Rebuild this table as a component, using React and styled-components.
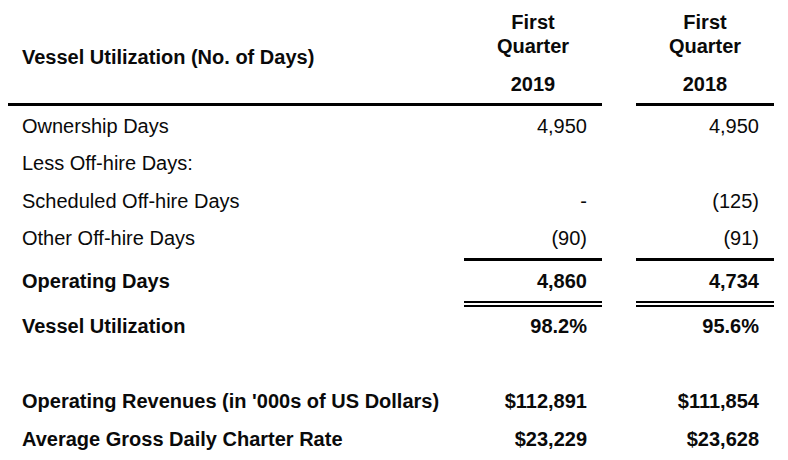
import React from "react";
import styled, { createGlobalStyle } from "styled-components";

const Global = createGlobalStyle`
  html, body { margin: 0; padding: 0; background: #fff; }
`;

const Table = styled.div`
  padding: 10px 0 0 8px;
  font-family: "Liberation Sans", Arial, sans-serif;
  font-size: 20px;
  color: #0a0a0a;
`;

const HeadRow = styled.div`
  display: flex;
  align-items: stretch;
  font-weight: 700;
  line-height: 24px;
`;

const HeadLabel = styled.div`
  width: 456px;
  box-sizing: border-box;
  padding-left: 14px;
  display: flex;
  align-items: center;
  border-bottom: 3px solid #000;
`;

const HeadCell = styled.div`
  width: 138px;
  box-sizing: border-box;
  text-align: center;
  padding-bottom: 7px;
  border-bottom: 3px solid #000;
  & + & { margin-left: 34px; }
`;

const Year = styled.div`
  margin-top: 14px;
`;

const Body = styled.div`
  padding-top: 1.5px;
`;

const Row = styled.div`
  display: flex;
  align-items: flex-start;
  line-height: ${(p) => p.$h || 37.5}px;
  font-weight: ${(p) => (p.$bold ? 700 : 400)};
  margin-top: ${(p) => p.$mt || 0}px;
`;

const Label = styled.div`
  width: 456px;
  box-sizing: border-box;
  padding-left: 14px;
  white-space: nowrap;
`;

const rules = {
  single: "3px solid #000",
  double: "6px double #000",
};

const Value = styled.div`
  width: 138px;
  box-sizing: border-box;
  padding-right: 15px;
  text-align: right;
  border-bottom: ${(p) => (p.$rule ? rules[p.$rule] : "none")};
  & + & { margin-left: 34px; }
`;

const rows = [
  { label: "Ownership Days", a: "4,950", b: "4,950" },
  { label: "Less Off-hire Days:", a: "", b: "" },
  { label: "Scheduled Off-hire Days", a: "-", b: "(125)" },
  { label: "Other Off-hire Days", a: "(90)", b: "(91)", rule: "single" },
  { label: "Operating Days", a: "4,860", b: "4,734", bold: true, h: 40, rule: "double" },
  { label: "Vessel Utilization", a: "98.2%", b: "95.6%", bold: true, h: 39 },
  { label: "Operating Revenues (in '000s of US Dollars)", a: "$112,891", b: "$111,854", bold: true, mt: 37.8 },
  { label: "Average Gross Daily Charter Rate", a: "$23,229", b: "$23,628", bold: true },
];

export default function App() {
  return (
    <>
      <Global />
      <Table>
        <HeadRow>
          <HeadLabel>Vessel Utilization (No. of Days)</HeadLabel>
          <HeadCell>
            <div>First</div>
            <div>Quarter</div>
            <Year>2019</Year>
          </HeadCell>
          <HeadCell>
            <div>First</div>
            <div>Quarter</div>
            <Year>2018</Year>
          </HeadCell>
        </HeadRow>
        <Body>
          {rows.map((r) => (
            <Row key={r.label} $bold={r.bold} $h={r.h} $mt={r.mt}>
              <Label>{r.label}</Label>
              <Value $rule={r.rule}>{r.a || "\u00a0"}</Value>
              <Value $rule={r.rule}>{r.b || "\u00a0"}</Value>
            </Row>
          ))}
        </Body>
      </Table>
    </>
  );
}
